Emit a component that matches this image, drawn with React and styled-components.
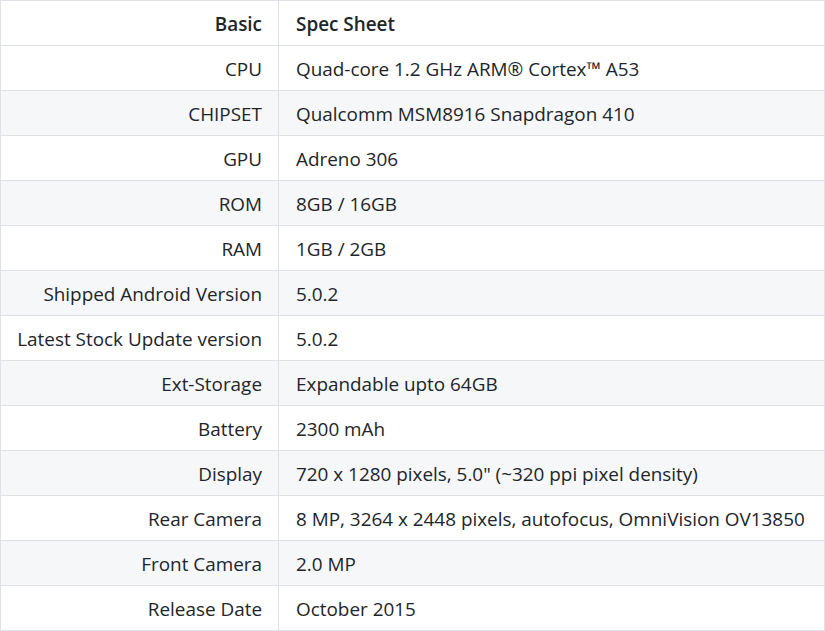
import React from "react";
import styled, { createGlobalStyle } from "styled-components";

const Global = createGlobalStyle`
  html, body { margin: 0; padding: 0; background: #fff; }
  body { font-family: "Open Sans", "Noto Sans", sans-serif; color: #212529; }
`;

const Table = styled.table`
  width: 825px;
  border-collapse: collapse;
  font-size: 18.9px;
  line-height: 26px;
`;

const Row = styled.tr`
  background: ${(p) => (p.$striped ? "#f6f7f9" : "#fff")};
`;

const Label = styled.td`
  width: 245px;
  border: 1px solid #dee2e6;
  padding: 10px 16px 8px;
  text-align: right;
  font-weight: ${(p) => (p.$head ? 600 : 400)};
  white-space: nowrap;
`;

const Value = styled.td`
  border: 1px solid #dee2e6;
  padding: 10px 17px 8px;
  text-align: left;
  font-weight: ${(p) => (p.$head ? 600 : 400)};
  white-space: nowrap;
`;

const rows = [
  ["CPU", "Quad-core 1.2 GHz ARM\u00AE Cortex\u2122 A53"],
  ["CHIPSET", "Qualcomm MSM8916 Snapdragon 410"],
  ["GPU", "Adreno 306"],
  ["ROM", "8GB / 16GB"],
  ["RAM", "1GB / 2GB"],
  ["Shipped Android Version", "5.0.2"],
  ["Latest Stock Update version", "5.0.2"],
  ["Ext-Storage", "Expandable upto 64GB"],
  ["Battery", "2300 mAh"],
  ["Display", "720 x 1280 pixels, 5.0\" (~320 ppi pixel density)"],
  ["Rear Camera", "8 MP, 3264 x 2448 pixels, autofocus, OmniVision OV13850"],
  ["Front Camera", "2.0 MP"],
  ["Release Date", "October 2015"],
];

export default function App() {
  return (
    <>
      <Global />
      <Table>
        <tbody>
          <Row>
            <Label $head>Basic</Label>
            <Value $head>Spec Sheet</Value>
          </Row>
          {rows.map(([k, v], i) => (
            <Row key={k} $striped={i % 2 === 1}>
              <Label>{k}</Label>
              <Value>{v}</Value>
            </Row>
          ))}
        </tbody>
      </Table>
    </>
  );
}
